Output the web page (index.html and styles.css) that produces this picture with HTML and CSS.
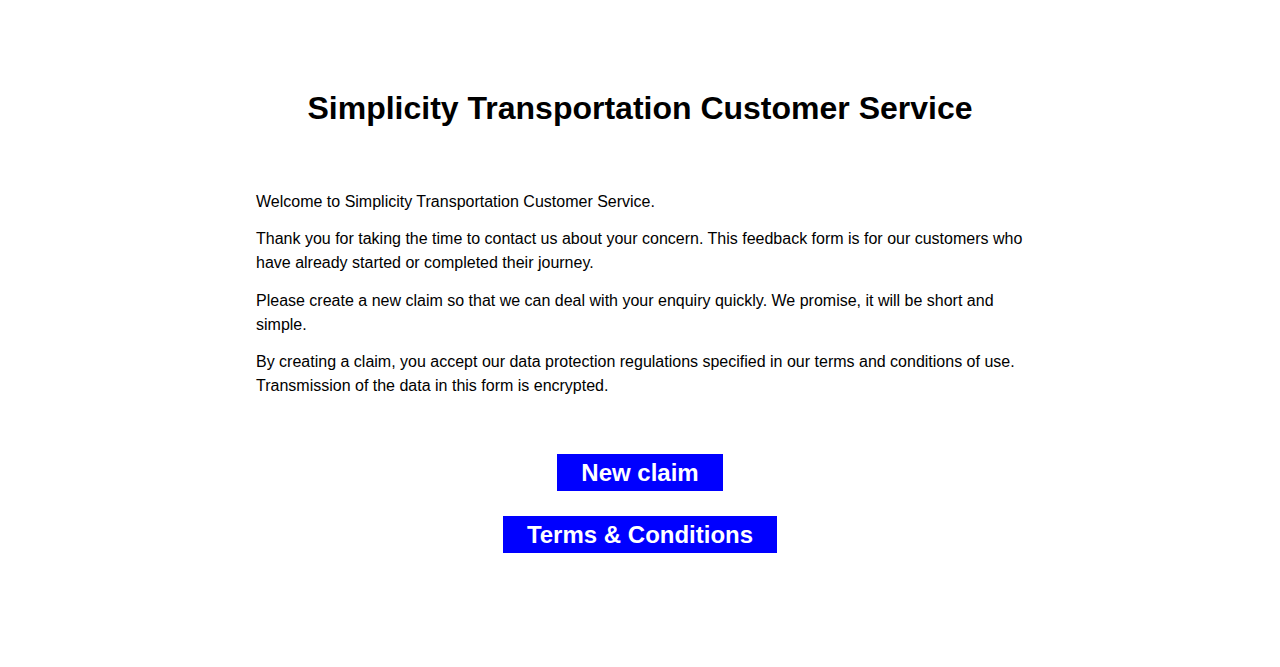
FILE: index.html
```html
<html>
	<head>
	<title>Simplicity Transportation Customer Service</title>
	<link rel="stylesheet" href="styles.css">
	</head>
	<body>
		<div class="page">
			<h1 class="title">Simplicity Transportation Customer Service</h1>
			<div class="intro">
				<p>Welcome to Simplicity Transportation Customer Service.</p>
				<p>Thank you for taking the time to contact us about your concern. This feedback form is for our customers who have already started or completed their journey.</p>
				<p>Please create a new claim so that we can deal with your enquiry quickly. We promise, it will be short and simple.</p>
				<p>By creating a claim, you accept our data protection regulations specified in our terms and conditions of use. Transmission of the data in this form is encrypted.</p>
			</div>
			<div class="actions">
				<a class="button" href="#">New claim</a>
				<a class="button" href="#">Terms &amp; Conditions</a>
			</div>
		</div>
	</body>
</html>
```

FILE: styles.css
```css
body {
	margin: 0;
	background-color: #ffffff;
	color: #000000;
	font-family: "Liberation Sans", Arial, sans-serif;
}
.page {
	width: 768px;
	margin: 0 auto;
	padding-top: 88px;
}
.title {
	margin: 0;
	font-size: 32px;
	line-height: 40px;
	text-align: center;
}
.intro {
	margin-top: 62px;
	font-size: 16px;
	line-height: 24px;
}
.intro p {
	margin: 0 0 13.3px 0;
}
.actions {
	margin-top: 56px;
	display: flex;
	flex-direction: column;
	align-items: center;
	gap: 25px;
}
.button {
	display: block;
	background-color: #0000ff;
	color: #ffffff;
	text-decoration: none;
	font-size: 24px;
	font-weight: bold;
	line-height: 29px;
	padding: 4px 24px;
}
```
